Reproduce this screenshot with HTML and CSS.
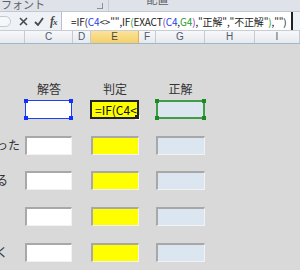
FILE: index.html
```html
<!DOCTYPE html>
<html lang="ja">
<head>
<meta charset="utf-8">
<link rel="stylesheet" href="styles.css">
</head>
<body>
<div class="app">
  <div class="ribbon">
    <div class="group g1"><span class="gname">フォント</span><span class="launch"></span></div>
    <div class="group g2"><span class="gname">配置</span></div>
  </div>
  <div class="fbar">
    <div class="namebox"><span class="grip"></span></div>
    <div class="fbtns">
      <svg width="9" height="9" viewBox="0 0 9 9"><path d="M1 1L8 8M8 1L1 8" stroke="#4a4a4a" stroke-width="1.6"/></svg>
      <svg width="10" height="9" viewBox="0 0 10 9"><path d="M1 5L4 8L9 1" stroke="#4a4a4a" stroke-width="1.8" fill="none"/></svg>
      <span class="fx">f<i>x</i></span>
    </div>
    <div class="finput"><span class="ftext">=IF(<b class="cb">C4</b>&lt;&gt;"",IF<b class="cg">(</b>EXACT<b class="cp">(</b><b class="cb">C4</b>,<b class="cg">G4</b><b class="cp">)</b>,"正解","不正解"<b class="cg">)</b>,"")</span></div>
    <div class="fend"></div>
  </div>
  <div class="cols">
    <div class="ch">B</div><div class="ch">C</div><div class="ch">D</div><div class="ch sel">E</div><div class="ch">F</div><div class="ch">G</div><div class="ch">H</div><div class="ch">I</div>
  </div>
  <div class="sheet">
    <div class="row labels">
      <div class="lead"></div><div class="lbl">解答</div><div></div><div class="lbl">判定</div><div></div><div class="lbl">正解</div>
    </div>
    <div class="row first">
      <div class="lead"></div>
      <div class="box ans sel-blue"><i class="k tl"></i><i class="k tr"></i><i class="k bl"></i><i class="k br"></i></div>
      <div></div>
      <div class="box active"><span class="celltext">=IF(C4&lt;&gt;"",IF(EXACT(C4,G4),"正解","不正解"),"")</span><i class="handle"></i></div>
      <div></div>
      <div class="box key sel-green"><i class="k tl"></i><i class="k tr"></i><i class="k bl"></i><i class="k br"></i></div>
    </div>
    <div class="row">
      <div class="lead p5">った</div>
      <div class="box ans inset"></div><div></div><div class="box judge inset"></div><div></div><div class="box key inset"></div>
    </div>
    <div class="row tight">
      <div class="lead p17">る</div>
      <div class="box ans inset"></div><div></div><div class="box judge inset"></div><div></div><div class="box key inset"></div>
    </div>
    <div class="row">
      <div class="lead"></div>
      <div class="box ans inset"></div><div></div><div class="box judge inset"></div><div></div><div class="box key inset"></div>
    </div>
    <div class="row">
      <div class="lead p17">く</div>
      <div class="box ans inset"></div><div></div><div class="box judge inset"></div><div></div><div class="box key inset"></div>
    </div>
  </div>
</div>
</body>
</html>
```
FILE: styles.css
```css
* { box-sizing: border-box; margin: 0; padding: 0; }
html, body { width: 300px; height: 270px; overflow: hidden; }
body { font-family: "Noto Sans CJK JP", "Liberation Sans", sans-serif; background: #d9d9d9; }
.app { width: 300px; height: 270px; display: flex; flex-direction: column; }

.ribbon { height: 12px; background: #dfe3e9; display: flex; border-bottom: 1px solid #c3c9d2; overflow: hidden; }
.group { position: relative; display: flex; align-items: flex-end; height: 11px; }
.g1 { width: 109px; border-right: 1px solid #c6ccd5; }
.g2 { flex: 1; justify-content: center; padding-right: 95px; }
.gname { font-size: 11px; line-height: 11px; color: #5a5f66; margin-bottom: 1px; margin-left: 1px; }
.g2 .gname { margin-bottom: 6px; }
.launch { position: absolute; right: 5px; bottom: 2px; width: 6px; height: 6px; border-right: 1px solid #8a9099; border-bottom: 1px solid #8a9099; }

.fbar { height: 19px; background: #eef1f5; display: flex; border-bottom: 1px solid #c8cdd4; }
.namebox { width: 17px; display: flex; align-items: center; }
.grip { width: 14px; height: 11px; margin-left: -3px; border: 1px solid #c2c8d0; border-radius: 0 6px 6px 0; background: #f6f7f9; }
.fbtns { width: 44px; display: flex; align-items: center; gap: 6px; padding-left: 2px; }
.fx { font-family: "Liberation Serif", serif; font-style: italic; font-weight: bold; font-size: 12px; color: #4a4a4a; letter-spacing: -1px; }
.fx i { font-size: 9px; }
.finput { width: 230px; background: #fff; border-left: 1px solid #b9c0ca; display: flex; align-items: center; padding-left: 9px; overflow: hidden; white-space: nowrap; }
.ftext { font-size: 10px; color: #222; letter-spacing: -0.15px; }
.ftext b { font-weight: normal; }
.cb { color: #1f3fe6; }
.cg { color: #1d9a2a; }
.cp { color: #9a2fb8; }
.fend { width: 2px; background: #222; margin-left: 0; }

.cols { height: 13px; display: grid; grid-template-columns: 25px 48px 18px 48px 17px 49px 50px 45px; background: linear-gradient(#f7f8fa, #e6e9ee); border-bottom: 1px solid #9eb6ce; }
.ch { border-right: 1px solid #c5cbd4; font-family: "Liberation Sans", sans-serif; font-size: 10px; line-height: 12px; color: #4c5a6e; text-align: center; overflow: hidden; }
.ch:first-child { color: transparent; }
.ch.sel { background: linear-gradient(#fbe39a, #f6cf6a); color: #4b4a3a; border-right-color: #e2b04f; }

.sheet { flex: 1; display: flex; flex-direction: column; padding-top: 38px; }
.row { display: grid; grid-template-columns: 25px 48px 18px 48px 17px 49px; height: 19px; margin-top: 17px; }
.row.labels { height: 14px; margin-top: 0; }
.row.first { margin-top: 4px; }
.row.tight { margin-top: 16px; }
.lbl { font-size: 12px; line-height: 14px; color: #333; text-align: center; }
.lead { font-size: 12px; line-height: 18px; color: #333; display: flex; justify-content: flex-end; white-space: nowrap; overflow: hidden; }
.p5 { padding-right: 5px; }
.p17 { padding-right: 17px; }

.box { position: relative; height: 19px; }
.ans { background: #fff; margin-right: 1px; }
.judge { background: #ffff00; }
.key { background: #dce6f1; }
.inset { border-top: 2px solid #a8a8a8; border-left: 2px solid #a8a8a8; border-bottom: 1px solid #f2f2f2; border-right: 1px solid #f2f2f2; }
.sel-blue { border: 1px solid #2040f0; }
.sel-green { border: 2px solid #3f9c47; }
.k { position: absolute; width: 4px; height: 4px; }
.sel-blue .k { background: #1030ff; }
.sel-green .k { background: #1a8a22; }
.sel-blue .tl { left: -2px; top: -2px; } .sel-blue .tr { right: -2px; top: -2px; }
.sel-blue .bl { left: -2px; bottom: -2px; } .sel-blue .br { right: -2px; bottom: -2px; }
.sel-green .tl { left: -3px; top: -3px; } .sel-green .tr { right: -3px; top: -3px; }
.sel-green .bl { left: -3px; bottom: -3px; } .sel-green .br { right: -3px; bottom: -3px; }
.active { background: #ffff00; border: 2px solid #222; margin-left: -1px; overflow: visible; }
.celltext { display: block; font-size: 12px; line-height: 15px; color: #111; padding-left: 3px; white-space: nowrap; overflow: hidden; width: 100%; }
.handle { position: absolute; right: -3px; bottom: -3px; width: 5px; height: 5px; background: #222; border: 1px solid #fff; border-top: none; border-left: none; }
```
